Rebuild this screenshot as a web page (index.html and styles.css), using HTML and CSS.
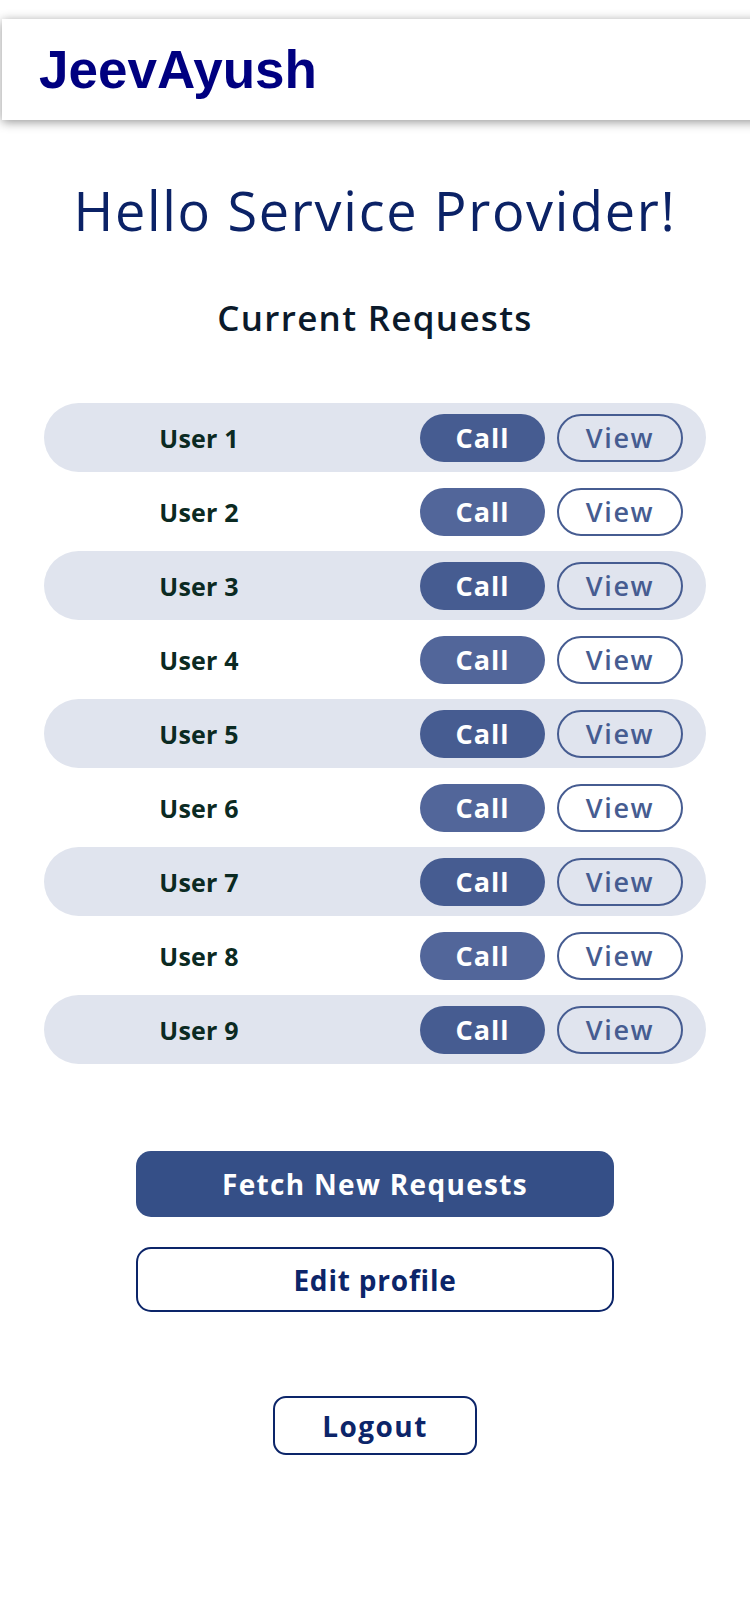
FILE: index.html
```html
<!DOCTYPE html>
<html lang="en">
<head>
<meta charset="utf-8">
<title>JeevAyush - Service Provider</title>
<link rel="stylesheet" href="styles.css">
</head>
<body>
<header class="topbar">
  <div class="logo">JeevAyush</div>
</header>
<main class="page">
  <h1 class="hello">Hello Service Provider!</h1>
  <h2 class="subtitle">Current Requests</h2>
  <ul class="requests">
    <li class="req shaded"><span class="user">User 1</span><div class="actions"><button class="call">Call</button><button class="view">View</button></div></li>
    <li class="req"><span class="user">User 2</span><div class="actions"><button class="call">Call</button><button class="view">View</button></div></li>
    <li class="req shaded"><span class="user">User 3</span><div class="actions"><button class="call">Call</button><button class="view">View</button></div></li>
    <li class="req"><span class="user">User 4</span><div class="actions"><button class="call">Call</button><button class="view">View</button></div></li>
    <li class="req shaded"><span class="user">User 5</span><div class="actions"><button class="call">Call</button><button class="view">View</button></div></li>
    <li class="req"><span class="user">User 6</span><div class="actions"><button class="call">Call</button><button class="view">View</button></div></li>
    <li class="req shaded"><span class="user">User 7</span><div class="actions"><button class="call">Call</button><button class="view">View</button></div></li>
    <li class="req"><span class="user">User 8</span><div class="actions"><button class="call">Call</button><button class="view">View</button></div></li>
    <li class="req shaded"><span class="user">User 9</span><div class="actions"><button class="call">Call</button><button class="view">View</button></div></li>
  </ul>
  <div class="controls">
    <button class="btn-fetch">Fetch New Requests</button>
    <button class="btn-edit">Edit profile</button>
    <button class="btn-logout">Logout</button>
  </div>
</main>
</body>
</html>
```
FILE: styles.css
```css
* { box-sizing: border-box; }

html, body {
  margin: 0;
  padding: 0;
  background: #ffffff;
  overflow-x: hidden;
}

body {
  font-family: "Open Sans", "DejaVu Sans", sans-serif;
  padding-top: 19px;
}

.topbar {
  margin-left: 2px;
  width: 760px;
  height: 101px;
  background: #ffffff;
  box-shadow: 0 2px 10px rgba(0, 0, 0, 0.42);
  display: flex;
  align-items: center;
  padding-left: 37px;
}

.logo {
  font-family: "Liberation Sans", Arial, sans-serif;
  font-weight: 700;
  font-size: 53px;
  color: #000080;
  line-height: 1;
}

.page {
  display: flex;
  flex-direction: column;
  align-items: center;
}

.hello {
  margin: 63px 0 0;
  font-size: 54px;
  line-height: 54px;
  font-weight: 400;
  letter-spacing: 1.7px;
  color: #0b2266;
  text-align: center;
}

.subtitle {
  margin: 64px 0 0;
  font-size: 35px;
  line-height: 34px;
  font-weight: 600;
  letter-spacing: 1.3px;
  color: #0b1a2b;
  text-align: center;
}

.requests {
  list-style: none;
  margin: 68px 0 0;
  padding: 0;
  width: 662px;
  display: flex;
  flex-direction: column;
  gap: 5px;
}

.req {
  height: 69px;
  border-radius: 35px;
  display: flex;
  align-items: center;
}

.req.shaded {
  background: #e0e4ee;
}

.user {
  flex: 0 0 310px;
  text-align: center;
  font-size: 25px;
  font-weight: 700;
  color: #0b2a22;
  letter-spacing: 0.2px;
}

.actions {
  margin-left: auto;
  padding-right: 23px;
  display: flex;
  gap: 12px;
}

.call, .view {
  font-family: "Open Sans", "DejaVu Sans", sans-serif;
  height: 48px;
  border-radius: 24px;
  font-size: 27px;
  padding: 0;
  line-height: 1;
  cursor: pointer;
}

.call {
  width: 125px;
  border: none;
  background: #52669a;
  color: #ffffff;
  font-weight: 700;
  letter-spacing: 1px;
}

.req.shaded .call {
  background: #465c91;
}

.view {
  width: 126px;
  border: 2px solid #465c91;
  background: transparent;
  color: #465c91;
  font-weight: 600;
  letter-spacing: 1.6px;
}

.controls {
  display: flex;
  flex-direction: column;
  align-items: center;
  margin-top: 87px;
}

.btn-fetch, .btn-edit, .btn-logout {
  font-family: "Open Sans", "DejaVu Sans", sans-serif;
  font-size: 28px;
  font-weight: 700;
  line-height: 1;
  padding: 0;
  cursor: pointer;
}

.btn-fetch {
  width: 478px;
  height: 66px;
  border: none;
  border-radius: 15px;
  background: #354f87;
  color: #ffffff;
  letter-spacing: 1.3px;
}

.btn-edit {
  margin-top: 30px;
  width: 478px;
  height: 65px;
  border: 2px solid #0c2569;
  border-radius: 15px;
  background: #ffffff;
  color: #0c2569;
  letter-spacing: 0.8px;
}

.btn-logout {
  margin-top: 84px;
  width: 204px;
  height: 59px;
  border: 2px solid #0c2569;
  border-radius: 13px;
  background: #ffffff;
  color: #0c2569;
  letter-spacing: 1.45px;
}
```
